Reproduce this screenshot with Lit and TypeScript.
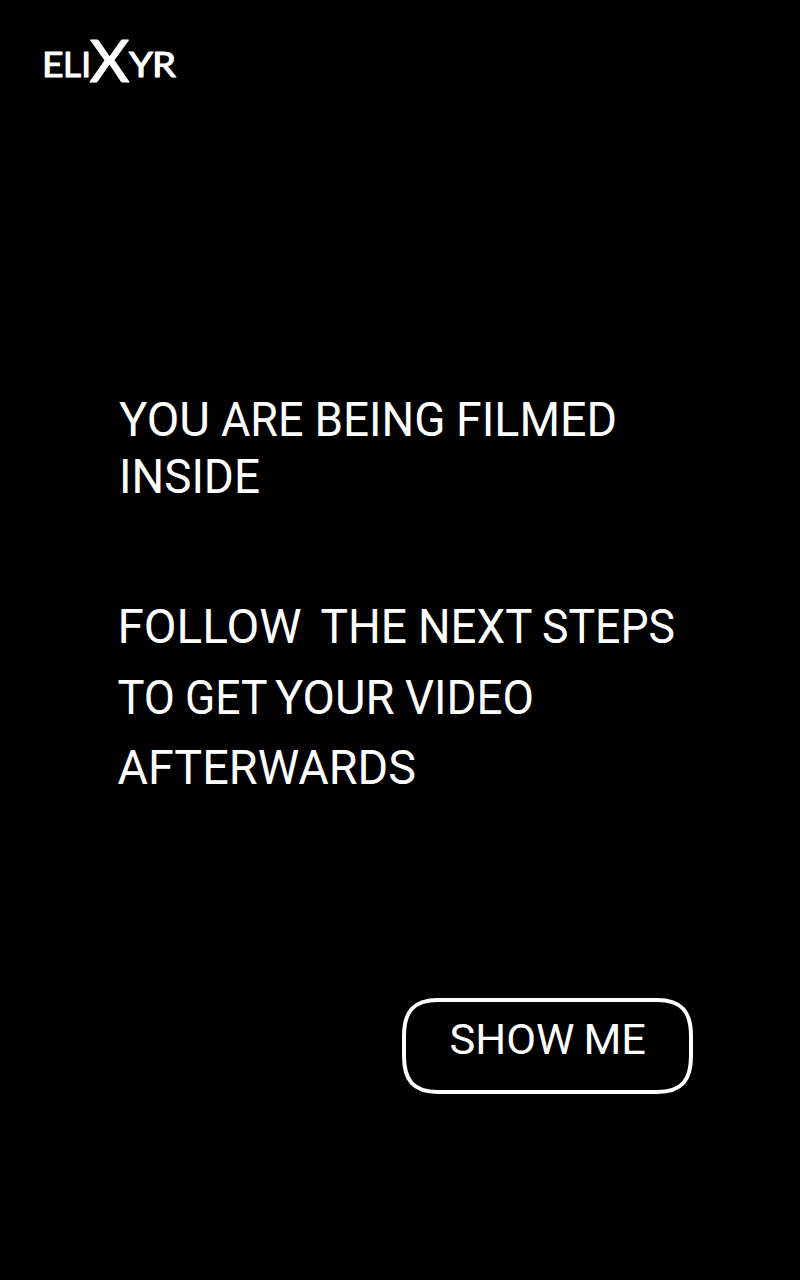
import { LitElement, html, svg, css } from "lit";
import { customElement, property } from "lit/decorators.js";

interface Word {
  text: string;
  x: number;
  width: number;
}

const w = (text: string, x: number, width: number): Word => ({ text, x, width });

const NOTICE: Word[][] = [
  [w("YOU", 0, 91), w("ARE", 102, 82.5), w("BEING", 195.5, 131), w("FILMED", 337, 161)],
  [w("INSIDE", 0, 141)],
];

const STEPS: Word[][] = [
  [w("FOLLOW", -1.5, 184), w("THE", 201.5, 86.5), w("NEXT", 299, 114.5), w("STEPS", 423, 133)],
  [w("TO", -1.5, 57.5), w("GET", 66, 82.5), w("YOUR", 156, 119.5), w("VIDEO", 286, 129)],
  [w("AFTERWARDS", -1.5, 298.5)],
];

/** One line of display lettering, each word fitted to its own measure. */
@customElement("fitted-line")
export class FittedLine extends LitElement {
  @property({ attribute: false }) words: Word[] = [];
  @property({ type: Number }) size = 47.5;

  static styles = css`
    :host {
      display: block;
    }
    .line {
      display: block;
      width: 100%;
      height: 48px;
      overflow: visible;
    }
    .word {
      font-family: Roboto, "Open Sans", sans-serif;
      font-weight: 400;
      fill: #fff;
    }
  `;

  render() {
    return html`<svg class="line">
      ${this.words.map(
        (word) => svg`<text class="word" x=${word.x} y="41" font-size=${this.size}
          textLength=${word.width} lengthAdjust="spacingAndGlyphs">${word.text}</text>`
      )}
    </svg>`;
  }
}

@customElement("app-root")
export class AppRoot extends LitElement {
  static styles = css`
    :host {
      display: block;
      background: #000;
      color: #fff;
      font-family: Roboto, "Open Sans", sans-serif;
    }
    .screen {
      box-sizing: border-box;
      height: 1280px;
      padding: 38px 107px 0 44px;
      display: flex;
      flex-direction: column;
      overflow: hidden;
    }
    .logo {
      display: block;
      width: 134px;
      height: 48px;
      overflow: visible;
      fill: #fff;
      stroke: #fff;
      stroke-linejoin: round;
      font-family: Lato, sans-serif;
    }
    .small {
      font-size: 35px;
      font-weight: 400;
      stroke-width: 1.1px;
    }
    .large {
      font-size: 58.5px;
      font-weight: 400;
      stroke-width: 1.2px;
    }
    .copy {
      margin: 309px 0 0 75px;
    }
    .notice,
    .steps {
      display: flex;
      flex-direction: column;
      margin: 0;
    }
    .notice {
      gap: 9px;
    }
    .steps {
      gap: 22.5px;
      margin-top: 102px;
    }
    .show {
      position: relative;
      display: flex;
      align-items: flex-start;
      align-self: flex-end;
      box-sizing: border-box;
      width: 291px;
      height: 96px;
      margin: 207px 0 0;
      padding: 15px 0 0 48px;
      border: 0;
      background: none;
      cursor: pointer;
    }
    .label {
      flex: 1;
    }
    .outline {
      position: absolute;
      inset: 0;
      width: 291px;
      height: 96px;
      fill: none;
      stroke: #fff;
      stroke-width: 4px;
    }
  `;

  render() {
    return html`
      <main class="screen">
        <svg class="logo" viewBox="0 0 134 48" role="img" aria-label="ELIXYR">
          <text class="small" y="38.6" x="-2" textLength="21.5" lengthAdjust="spacingAndGlyphs">E</text>
          <text class="small" y="38.6" x="19" textLength="18" lengthAdjust="spacingAndGlyphs">L</text>
          <text class="small" y="38.6" x="37.3">I</text>
          <text class="large" y="44.3" x="45.5" textLength="40" lengthAdjust="spacingAndGlyphs">X</text>
          <text class="small" y="38.6" x="85" textLength="24" lengthAdjust="spacingAndGlyphs">Y</text>
          <text class="small" y="38.6" x="108" textLength="24" lengthAdjust="spacingAndGlyphs">R</text>
        </svg>
        <section class="copy">
          <p class="notice">
            ${NOTICE.map((line) => html`<fitted-line .words=${line}></fitted-line>`)}
          </p>
          <p class="steps">
            ${STEPS.map((line) => html`<fitted-line .words=${line}></fitted-line>`)}
          </p>
        </section>
        <button class="show">
          <svg class="outline" viewBox="0 0 291 96" aria-hidden="true">
            <path d="M36 2H255C280 2 289 14 289 38V58C289 82 280 94 255 94H36C11 94 2 82 2 58V38C2 14 11 2 36 2Z" />
          </svg>
          <fitted-line class="label" .size=${43} .words=${[w("SHOW", -0.5, 125), w("ME", 133.5, 62.5)]}></fitted-line>
        </button>
      </main>
    `;
  }
}
